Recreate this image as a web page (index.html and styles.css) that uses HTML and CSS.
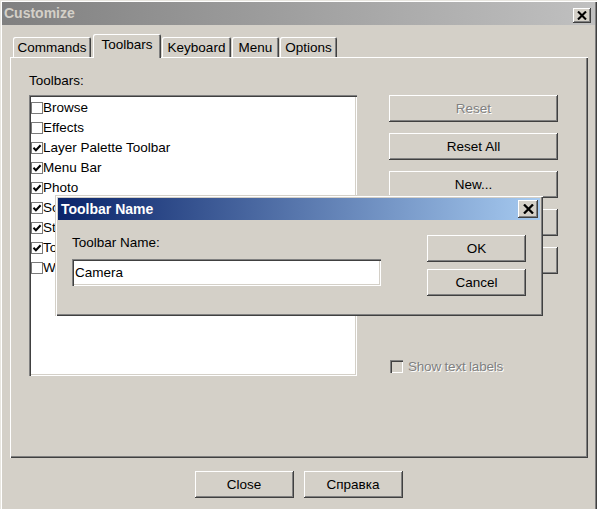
FILE: index.html
```html
<!DOCTYPE html>
<html>
<head>
<meta charset="utf-8">
<title>Customize</title>
<link rel="stylesheet" href="styles.css">
</head>
<body>
<div class="window">
  <div class="titlebar">
    <span class="title">Customize</span>
    <span class="xbtn xbtn-main"><svg width="10" height="9" viewBox="0 0 10 9"><path d="M1 0.5 L9 8.5 M9 0.5 L1 8.5" stroke="#000" stroke-width="2.1" fill="none"/></svg></span>
  </div>

  <div class="tabs">
    <div class="tab tab-commands">Commands</div>
    <div class="tab tab-active">Toolbars</div>
    <div class="tab tab-keyboard">Keyboard</div>
    <div class="tab tab-menu">Menu</div>
    <div class="tab tab-options">Options</div>
  </div>

  <div class="panel">
    <div class="label">Toolbars:</div>
    <div class="listbox">
      <div class="item"><span class="cb"></span><span>Browse</span></div>
      <div class="item"><span class="cb"></span><span>Effects</span></div>
      <div class="item"><span class="cb"><svg width="10" height="10" viewBox="0 0 10 10"><polyline points="1.5,4.8 3.9,7.3 8.6,2.3" stroke="#000" stroke-width="2" fill="none"/></svg></span><span>Layer Palette Toolbar</span></div>
      <div class="item"><span class="cb"><svg width="10" height="10" viewBox="0 0 10 10"><polyline points="1.5,4.8 3.9,7.3 8.6,2.3" stroke="#000" stroke-width="2" fill="none"/></svg></span><span>Menu Bar</span></div>
      <div class="item"><span class="cb"><svg width="10" height="10" viewBox="0 0 10 10"><polyline points="1.5,4.8 3.9,7.3 8.6,2.3" stroke="#000" stroke-width="2" fill="none"/></svg></span><span>Photo</span></div>
      <div class="item"><span class="cb"><svg width="10" height="10" viewBox="0 0 10 10"><polyline points="1.5,4.8 3.9,7.3 8.6,2.3" stroke="#000" stroke-width="2" fill="none"/></svg></span><span>Script</span></div>
      <div class="item"><span class="cb"><svg width="10" height="10" viewBox="0 0 10 10"><polyline points="1.5,4.8 3.9,7.3 8.6,2.3" stroke="#000" stroke-width="2" fill="none"/></svg></span><span>Standard Toolbar</span></div>
      <div class="item"><span class="cb"><svg width="10" height="10" viewBox="0 0 10 10"><polyline points="1.5,4.8 3.9,7.3 8.6,2.3" stroke="#000" stroke-width="2" fill="none"/></svg></span><span>Tools</span></div>
      <div class="item"><span class="cb"></span><span>Web</span></div>
    </div>
    <div class="side">
      <div class="btn btn-disabled">Reset</div>
      <div class="btn">Reset All</div>
      <div class="btn">New...</div>
      <div class="btn">Rename...</div>
      <div class="btn">Delete</div>
      <div class="chkrow"><span class="cb-dis"></span><span class="dis-text">Show text labels</span></div>
    </div>
  </div>

  <div class="footer">
    <div class="btn btn-foot">Close</div>
    <div class="btn btn-foot">Справка</div>
  </div>

  <div class="dialog">
    <div class="dlg-title">
      <span class="dlg-title-text">Toolbar Name</span>
      <span class="xbtn xbtn-dlg"><svg width="11" height="10" viewBox="0 0 11 10"><path d="M1 0.5 L10 9.5 M10 0.5 L1 9.5" stroke="#000" stroke-width="2.3" fill="none"/></svg></span>
    </div>
    <div class="dlg-body">
      <div class="dlg-left">
        <div class="dlg-label">Toolbar Name:</div>
        <div class="textbox">Camera</div>
      </div>
      <div class="dlg-right">
        <div class="btn btn-dlg">OK</div>
        <div class="btn btn-dlg">Cancel</div>
      </div>
    </div>
  </div>
</div>
</body>
</html>
```

FILE: styles.css
```css
* { box-sizing: border-box; }

html, body {
  margin: 0;
  padding: 0;
  background: #d4d0c8;
}

body {
  font-family: "Liberation Sans", Arial, sans-serif;
  font-size: 13.5px;
  color: #000;
}

.window {
  position: relative;
  width: 597px;
  height: 509px;
  background: #d4d0c8;
  overflow: hidden;
  box-shadow: inset 1px 1px 0 #e8e6e0, inset 2px 2px 0 #ffffff, inset -1px 0 0 #404040, inset -2px 0 0 #808080;
}

/* main title bar */
.titlebar {
  margin: 2px 2px 0 2px;
  height: 23px;
  display: flex;
  align-items: flex-start;
  background: linear-gradient(to right, #808080, #c0c0c0);
}

.title {
  font-weight: bold;
  font-size: 14px;
  color: #d4d0c8;
  padding-left: 2px;
  line-height: 23px;
  flex: 1;
}

.xbtn {
  display: flex;
  align-items: center;
  justify-content: center;
  background: #d4d0c8;
  box-shadow: inset -1px -1px 0 #404040, inset 1px 1px 0 #ffffff, inset -2px -2px 0 #808080, inset 2px 2px 0 #d4d0c8;
}

.xbtn-main {
  width: 18px;
  height: 15px;
  margin-top: 6px;
  margin-right: 4px;
}

/* tabs */
.tabs {
  display: flex;
  align-items: flex-end;
  gap: 1px;
  height: 23px;
  margin: 9px 0 0 13px;
}

.tab {
  height: 20px;
  display: flex;
  align-items: center;
  justify-content: center;
  background: #d4d0c8;
  border-radius: 2px 2px 0 0;
  box-shadow: inset 1px 1px 0 #ffffff, inset -1px 0 0 #404040, inset -2px 0 0 #808080;
}

.tab-commands { width: 78px; }
.tab-keyboard { width: 69px; }
.tab-menu { width: 47px; }
.tab-options { width: 57px; }

.tab-active {
  width: 68px;
  height: 24px;
  margin-left: 1px;
  margin-bottom: -1px;
  padding-bottom: 3px;
  position: relative;
  z-index: 1;
}

/* panel */
.panel {
  margin-left: 10px;
  width: 578px;
  height: 401px;
  padding: 16px 0 0 19px;
  display: grid;
  grid-template-columns: 328px 169px;
  grid-template-rows: 16px 281px;
  column-gap: 32px;
  row-gap: 6px;
  box-shadow: inset 1px 1px 0 #ffffff, inset -1px -1px 0 #404040, inset -2px -2px 0 #808080;
}

.label {
  grid-column: 1;
  grid-row: 1;
  line-height: 16px;
}

.listbox {
  grid-column: 1;
  grid-row: 2;
  background: #ffffff;
  padding: 2px 2px 2px 2px;
  box-shadow: inset 1px 1px 0 #808080, inset 2px 2px 0 #404040, inset -1px -1px 0 #ffffff, inset -2px -2px 0 #d4d0c8;
}

.item {
  height: 20px;
  display: flex;
  align-items: center;
  white-space: nowrap;
  padding-top: 1px;
}

.cb {
  width: 12px;
  height: 12px;
  border: 1px solid #7a7a7a;
  background: #ffffff;
  display: flex;
  align-items: center;
  justify-content: center;
  flex: none;
}

.side {
  grid-column: 2;
  grid-row: 2;
  display: flex;
  flex-direction: column;
  gap: 11px;
}

.btn {
  height: 27px;
  display: flex;
  align-items: center;
  justify-content: center;
  background: #d4d0c8;
  box-shadow: inset -1px -1px 0 #404040, inset 1px 1px 0 #ffffff, inset -2px -2px 0 #808080, inset 2px 2px 0 #d4d0c8;
  white-space: nowrap;
}

.btn-disabled {
  color: #808080;
  text-shadow: 1px 1px 0 #ffffff;
}

.chkrow {
  margin-top: 73px;
  height: 16px;
  display: flex;
  align-items: center;
  padding-left: 1px;
}

.cb-dis {
  width: 13px;
  height: 13px;
  background: #d4d0c8;
  box-shadow: inset 1px 1px 0 #808080, inset 2px 2px 0 #404040, inset -1px -1px 0 #ffffff, inset -2px -2px 0 #d4d0c8;
  margin-right: 5px;
  flex: none;
}

.dis-text {
  color: #808080;
  text-shadow: 1px 1px 0 #ffffff;
  letter-spacing: -0.2px;
}

/* footer */
.footer {
  margin-top: 13px;
  display: flex;
  justify-content: center;
  gap: 10px;
}

.btn-foot {
  width: 99px;
}

/* Toolbar Name dialog (floating over the Customize window) */
.dialog {
  position: absolute;
  left: 55px;
  top: 195px;
  width: 488px;
  height: 121px;
  padding: 3px;
  background: #d4d0c8;
  box-shadow: inset 1px 1px 0 #d4d0c8, inset 2px 2px 0 #ffffff, inset -1px -1px 0 #404040, inset -2px -2px 0 #808080;
}

.dlg-title {
  height: 22px;
  display: flex;
  align-items: center;
  background: linear-gradient(to right, #0a246a, #a6caf0);
}

.dlg-title-text {
  flex: 1;
  color: #ffffff;
  font-weight: bold;
  font-size: 14px;
  padding-left: 3px;
}

.xbtn-dlg {
  width: 20px;
  height: 18px;
  margin-right: 2px;
}

.dlg-body {
  display: flex;
  padding: 15px 14px 0 14px;
}

.dlg-left {
  width: 309px;
}

.dlg-label {
  line-height: 16px;
  margin-bottom: 8px;
}

.textbox {
  height: 27px;
  background: #ffffff;
  display: flex;
  align-items: center;
  padding-left: 3px;
  box-shadow: inset 1px 1px 0 #808080, inset 2px 2px 0 #404040, inset -1px -1px 0 #ffffff, inset -2px -2px 0 #d4d0c8;
}

.dlg-right {
  margin-left: auto;
  display: flex;
  flex-direction: column;
  gap: 7px;
}

.btn-dlg {
  width: 99px;
}
```
